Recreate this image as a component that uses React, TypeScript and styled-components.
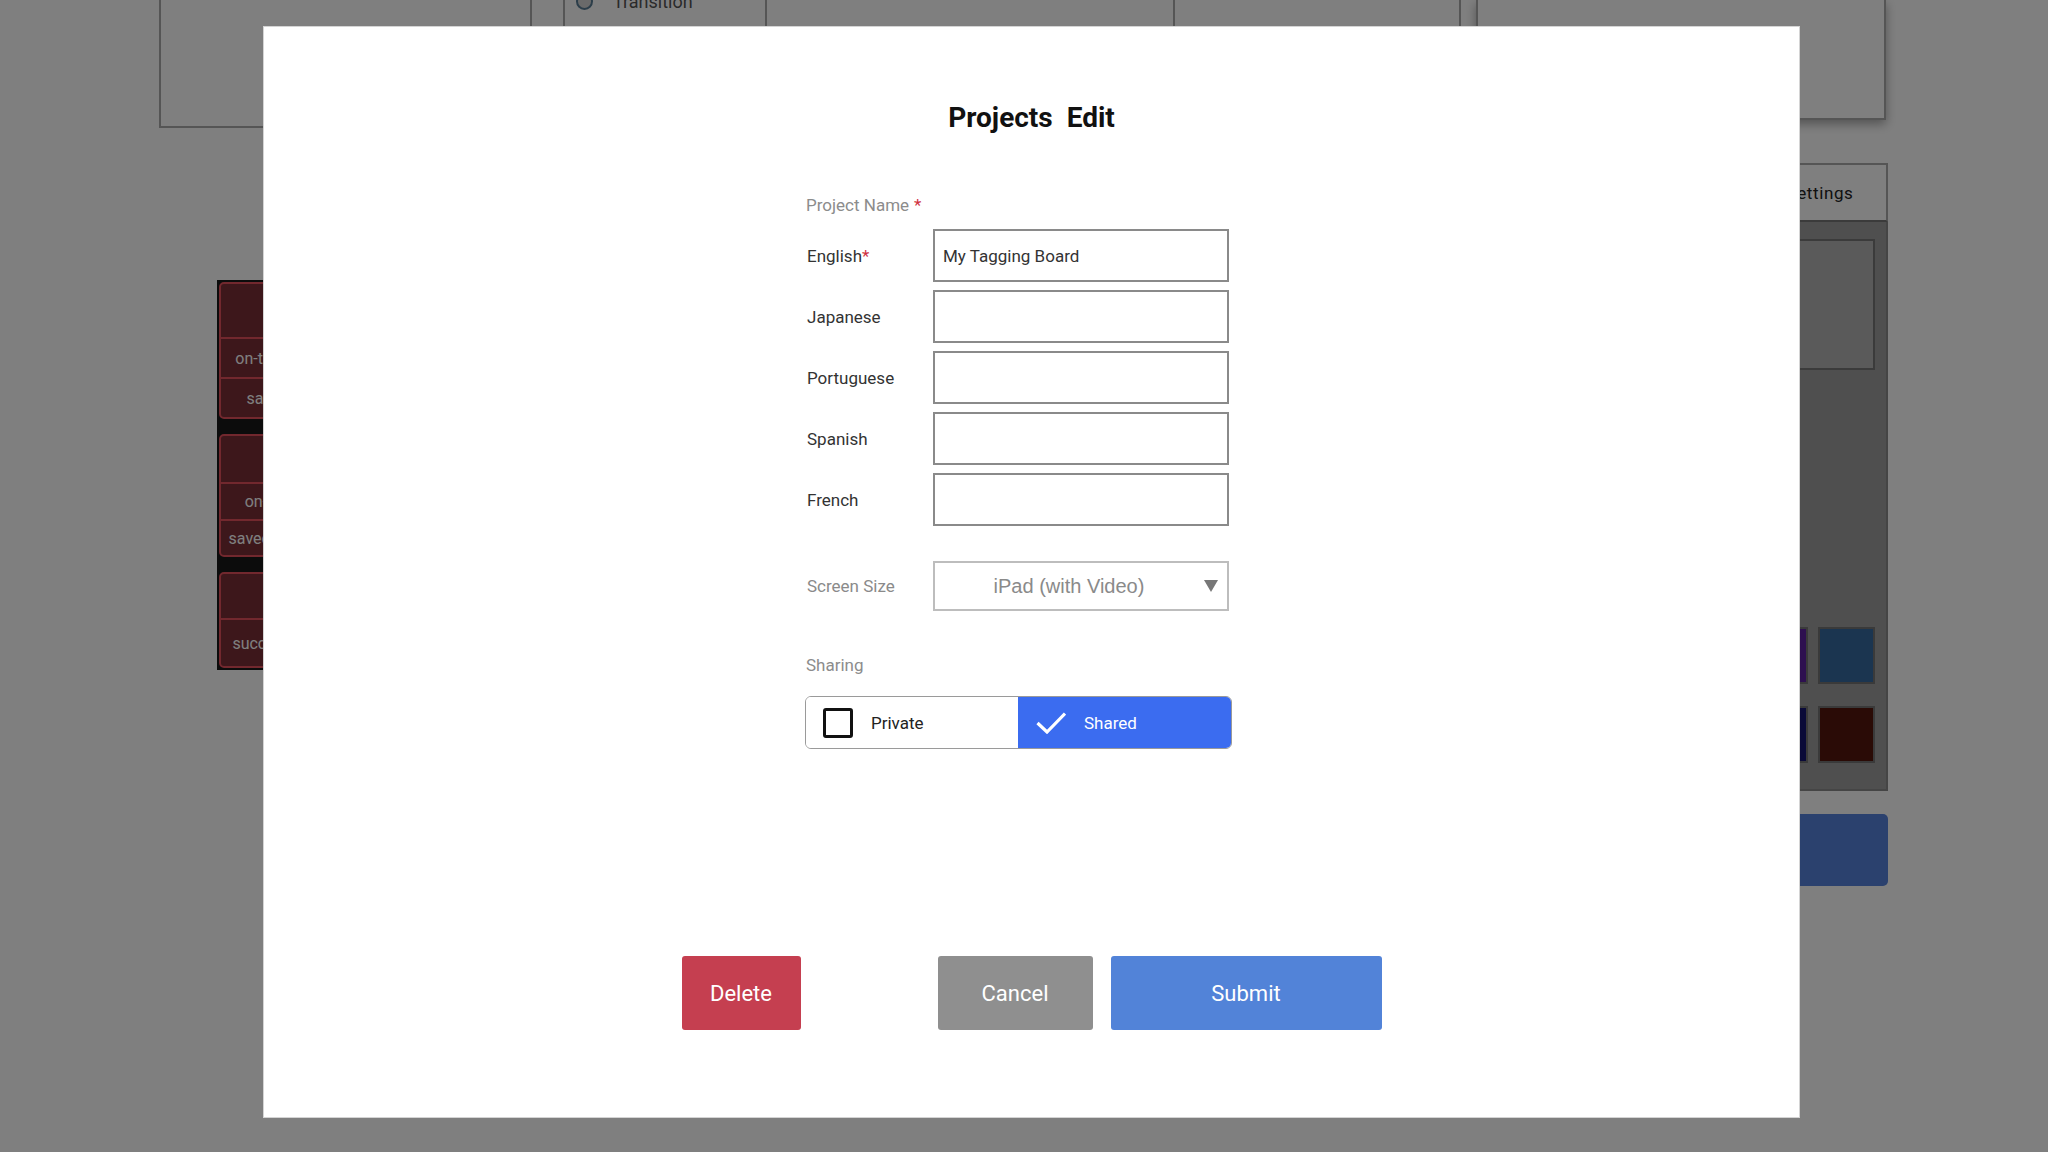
import styled, { createGlobalStyle } from "styled-components";

const GlobalStyle = createGlobalStyle`
  html, body {
    margin: 0;
    padding: 0;
    height: 100%;
    background: #ffffff;
    overflow: hidden;
  }
  body {
    font-family: Roboto, "Liberation Sans", sans-serif;
  }
  * {
    box-sizing: border-box;
  }
`;

/* ---------- the app behind the dialog ---------- */

const Workspace = styled.div`
  display: flex;
  height: 100vh;
  padding-left: 159px;
  overflow: hidden;
`;

const LeftColumn = styled.div`
  width: 373px;
  display: flex;
  flex-direction: column;
`;

const PreviewBox = styled.div`
  height: 128px;
  border: 2px solid #aaaaaa;
  border-top: none;
`;

const StateList = styled.div`
  margin: 152px 0 0 58px;
  width: 130px;
  padding: 2px;
  background: #181818;
  display: flex;
  flex-direction: column;
  gap: 15px;
`;

const StateGroup = styled.div`
  border: 2px solid #e4505c;
  border-radius: 5px;
  background: #7a2e36;
  overflow: hidden;
`;

const StateItem = styled.div<{ $h: number }>`
  height: ${(p) => p.$h}px;
  display: flex;
  align-items: center;
  justify-content: center;
  color: #ffffff;
  font-size: 16px;
  white-space: nowrap;
  & + & {
    border-top: 2px solid #e4505c;
  }
`;

const CenterPanel = styled.div`
  margin-left: 31px;
  width: 898px;
  height: 300px;
  border-left: 2px solid #aaaaaa;
  border-right: 2px solid #aaaaaa;
  display: grid;
  grid-template-columns: 202px 408px 1fr;
  align-items: start;
`;

const Cell = styled.div`
  height: 100%;
  border-right: 2px solid #aaaaaa;
  &:last-child {
    border-right: none;
  }
`;

const RadioRow = styled.div`
  margin-top: -9px;
  padding-left: 11px;
  display: flex;
  align-items: center;
  gap: 20px;
  font-size: 18px;
  color: #555555;
`;

const RadioDot = styled.span`
  width: 17px;
  height: 17px;
  border-radius: 50%;
  border: 2px solid #587c94;
  background: #d4d4d4;
`;

const RightColumn = styled.div`
  margin-left: 15px;
  width: 412px;
  display: flex;
  flex-direction: column;
`;

const RightTopBox = styled.div`
  width: 410px;
  height: 120px;
  border: 2px solid #aaaaaa;
  border-top: none;
  box-shadow: 0 4px 10px rgba(0, 0, 0, 0.35);
`;

const TabBar = styled.div`
  margin-top: 43px;
  height: 59px;
  display: flex;
  justify-content: flex-end;
`;

const Tab = styled.div`
  width: 136px;
  border: 2px solid #aaaaaa;
  border-bottom-color: #777777;
  display: flex;
  align-items: center;
  justify-content: center;
  font-size: 17px;
  letter-spacing: 0.6px;
  color: #222222;
`;

const SettingsPanel = styled.div`
  height: 569px;
  background: #9e9e9e;
  border: 2px solid #8a8a8a;
  border-top: none;
  padding: 17px 11px 26px 12px;
  display: flex;
  flex-direction: column;
`;

const PreviewWell = styled.div`
  height: 131px;
  background: #b4b4b4;
  border: 2px solid #777777;
`;

const SwatchGrid = styled.div`
  margin-top: auto;
  display: grid;
  grid-template-columns: repeat(4, 57px);
  column-gap: 10px;
  row-gap: 22px;
  justify-content: end;
`;

const Swatch = styled.div<{ $c: string }>`
  height: 57px;
  background: ${(p) => p.$c};
  border: 2px solid #747474;
`;

const AddButton = styled.div`
  margin-top: 23px;
  height: 72px;
  border-radius: 5px;
  background: #5682dc;
`;

/* ---------- the dialog ---------- */

const Overlay = styled.div`
  position: fixed;
  inset: 0;
  background: rgba(0, 0, 0, 0.5);
  display: flex;
  align-items: flex-start;
  padding: 26px 0 0 263px;
`;

const Dialog = styled.div`
  width: 1537px;
  height: 1092px;
  background: #ffffff;
  border: 1px solid #d4d4d4;
  padding: 74px 0 87px;
  display: flex;
  flex-direction: column;
  align-items: center;
`;

const Title = styled.h1`
  margin: 0;
  font-size: 28px;
  line-height: 34px;
  font-weight: 700;
  color: #111111;
  white-space: pre;
`;

const Form = styled.div`
  align-self: flex-start;
  margin-left: 541px;
  width: 427px;
  display: flex;
  flex-direction: column;
`;

const SectionLabel = styled.div<{ $top: number }>`
  margin-top: ${(p) => p.$top}px;
  font-size: 17px;
  line-height: 20px;
  color: #8c8c8c;
  padding-left: 1px;
`;

const Required = styled.span<{ $gap?: boolean }>`
  color: #d0313f;
  margin-left: ${(p) => (p.$gap ? "5px" : "0")};
`;

const FieldList = styled.div`
  margin-top: 14px;
  display: flex;
  flex-direction: column;
  gap: 8px;
`;

const FieldRow = styled.div<{ $top?: number }>`
  display: flex;
  align-items: center;
  margin-top: ${(p) => p.$top || 0}px;
`;

const FieldLabel = styled.label<{ $muted?: boolean }>`
  width: 128px;
  padding-left: 2px;
  font-size: 17px;
  color: ${(p) => (p.$muted ? "#8a8a8a" : "#333333")};
`;

const TextInput = styled.input`
  width: 296px;
  height: 53px;
  border: 2px solid #8a8a8a;
  border-radius: 0;
  padding: 0 8px;
  font-family: Roboto, "Liberation Sans", sans-serif;
  font-size: 17px;
  color: #333333;
  outline: none;
`;

const SelectBox = styled.div`
  position: relative;
  width: 296px;
  height: 50px;
  border: 2px solid #bdbdbd;
  padding-right: 24px;
  display: flex;
  align-items: center;
  justify-content: center;
  font-family: "Liberation Sans", Arial, sans-serif;
  font-size: 20px;
  color: #8a8a8a;
`;

const SelectArrow = styled.svg`
  position: absolute;
  right: 9px;
  top: 17px;
`;

const Toggle = styled.div`
  margin-top: 21px;
  height: 53px;
  display: flex;
  border: 1.5px solid #9a9a9a;
  border-radius: 6px;
  overflow: hidden;
`;

const ToggleOption = styled.div<{ $active?: boolean }>`
  flex: 1;
  display: flex;
  align-items: center;
  gap: 18px;
  padding-left: ${(p) => (p.$active ? "18px" : "17px")};
  background: ${(p) => (p.$active ? "#3b6cf0" : "#ffffff")};
  color: ${(p) => (p.$active ? "#ffffff" : "#222222")};
  font-size: 17px;
`;

const CheckSquare = styled.span`
  width: 30px;
  height: 30px;
  border: 3px solid #111111;
  border-radius: 3px;
`;

const ButtonRow = styled.div`
  margin-top: auto;
  width: 700px;
  display: flex;
  gap: 18px;
`;

const ActionButton = styled.button<{ $bg: string; $w: number }>`
  width: ${(p) => p.$w}px;
  height: 74px;
  border: none;
  border-radius: 3px;
  background: ${(p) => p.$bg};
  color: #ffffff;
  font-family: Roboto, "Liberation Sans", sans-serif;
  font-size: 22px;
  &:first-child {
    margin-right: auto;
  }
`;

const languages = ["Japanese", "Portuguese", "Spanish", "French"];

const swatches = ["#7a7a7a", "#9a6a3a", "#5c20a0", "#366aa0", "#3a7a4a", "#a06a20", "#141470", "#54160c"];

function App() {
  return (
    <>
      <GlobalStyle />
      <Workspace>
        <LeftColumn>
          <PreviewBox />
          <StateList>
            <StateGroup>
              <StateItem $h={53} />
              <StateItem $h={40}>on-touch-end</StateItem>
              <StateItem $h={40}>save-draft</StateItem>
            </StateGroup>
            <StateGroup>
              <StateItem $h={46} />
              <StateItem $h={37}>on-change</StateItem>
              <StateItem $h={36}>saved-changes</StateItem>
            </StateGroup>
            <StateGroup>
              <StateItem $h={44} />
              <StateItem $h={48}>success-state</StateItem>
            </StateGroup>
          </StateList>
        </LeftColumn>

        <CenterPanel>
          <Cell>
            <RadioRow>
              <RadioDot />
              Transition
            </RadioRow>
          </Cell>
          <Cell />
          <Cell />
        </CenterPanel>

        <RightColumn>
          <RightTopBox />
          <TabBar>
            <Tab>Settings</Tab>
          </TabBar>
          <SettingsPanel>
            <PreviewWell />
            <SwatchGrid>
              {swatches.map((c) => (
                <Swatch key={c} $c={c} />
              ))}
            </SwatchGrid>
          </SettingsPanel>
          <AddButton />
        </RightColumn>
      </Workspace>

      <Overlay>
        <Dialog>
          <Title>{"Projects  Edit"}</Title>
          <Form>
            <SectionLabel $top={60}>
              Project Name<Required $gap>*</Required>
            </SectionLabel>
            <FieldList>
              <FieldRow>
                <FieldLabel>
                  English<Required>*</Required>
                </FieldLabel>
                <TextInput defaultValue="My Tagging Board" />
              </FieldRow>
              {languages.map((lang) => (
                <FieldRow key={lang}>
                  <FieldLabel>{lang}</FieldLabel>
                  <TextInput />
                </FieldRow>
              ))}
            </FieldList>

            <FieldRow $top={35}>
              <FieldLabel $muted>Screen Size</FieldLabel>
              <SelectBox>
                iPad (with Video)
                <SelectArrow width="14" height="12" viewBox="0 0 14 12">
                  <polygon points="0,0 14,0 7,12" fill="#777777" />
                </SelectArrow>
              </SelectBox>
            </FieldRow>

            <SectionLabel $top={44}>Sharing</SectionLabel>
            <Toggle>
              <ToggleOption>
                <CheckSquare />
                Private
              </ToggleOption>
              <ToggleOption $active>
                <svg width="30" height="22" viewBox="0 0 30 22">
                  <path d="M1.5 11 L11 20 L29 1.5" fill="none" stroke="#ffffff" strokeWidth="3.2" />
                </svg>
                Shared
              </ToggleOption>
            </Toggle>
          </Form>

          <ButtonRow>
            <ActionButton $bg="#c53f50" $w={119}>Delete</ActionButton>
            <ActionButton $bg="#8f8f8f" $w={155}>Cancel</ActionButton>
            <ActionButton $bg="#5283d8" $w={271}>Submit</ActionButton>
          </ButtonRow>
        </Dialog>
      </Overlay>
    </>
  );
}

export default App;
